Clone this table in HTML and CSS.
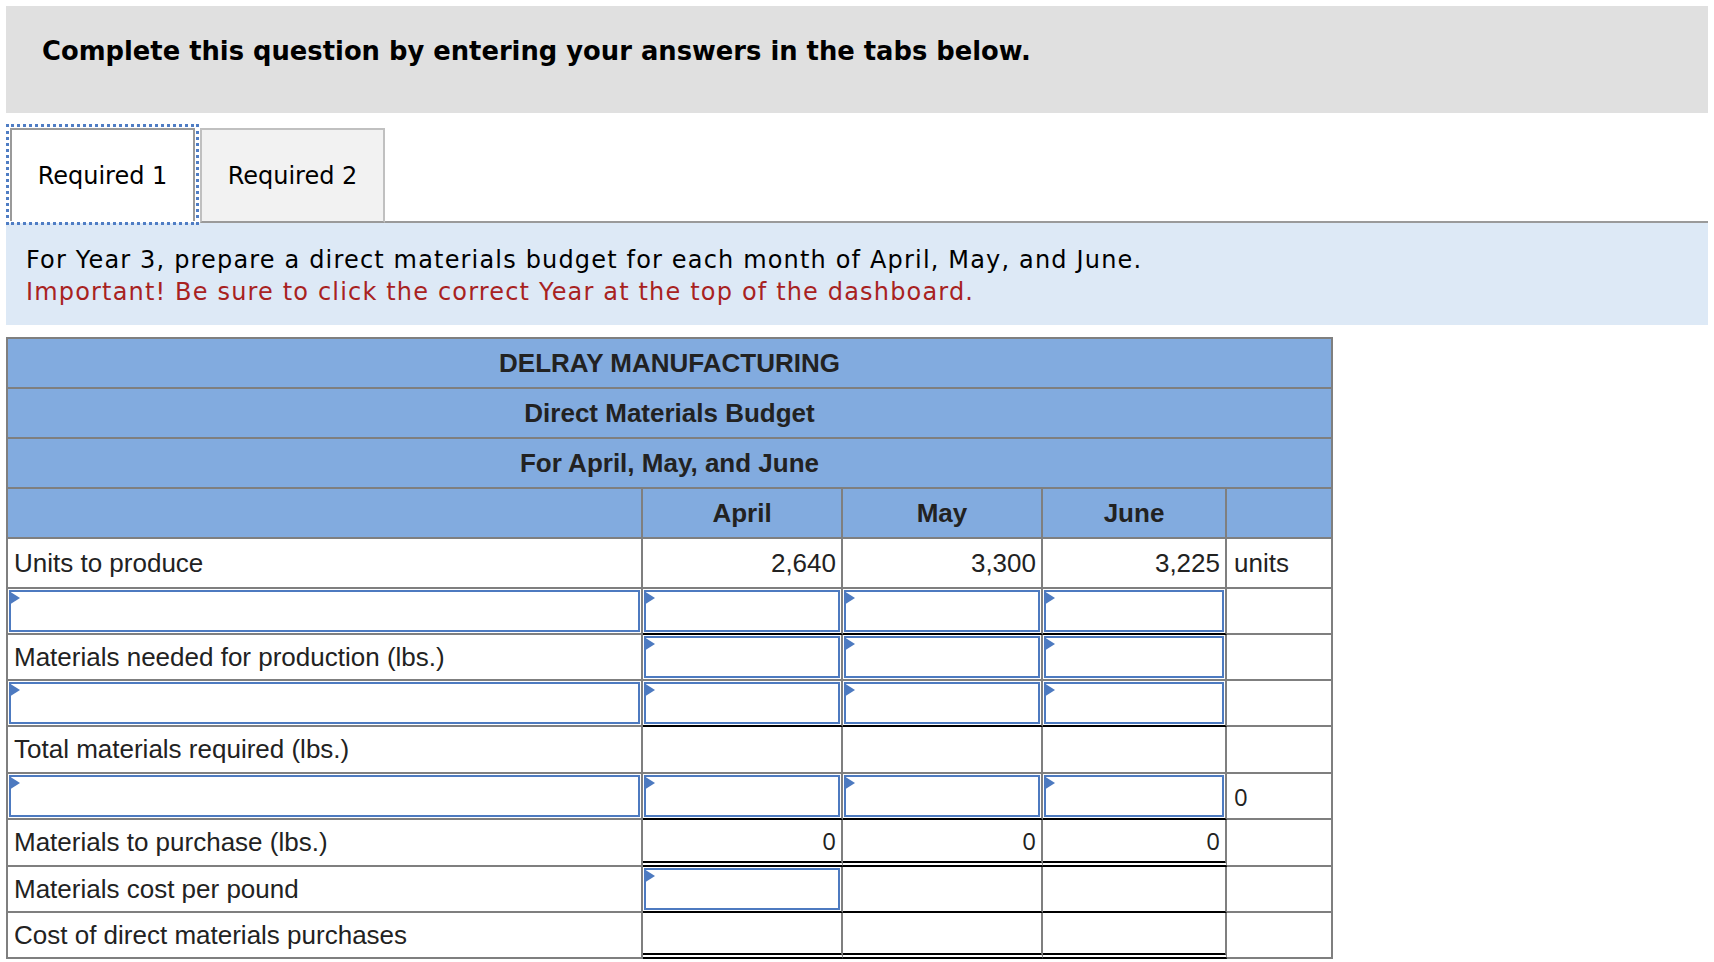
FILE: index.html
```html
<!DOCTYPE html>
<html lang="en">
<head>
<meta charset="utf-8">
<title>Direct Materials Budget</title>
<link rel="stylesheet" href="styles.css">
</head>
<body>
<div class="page">
  <div class="qhead">Complete this question by entering your answers in the tabs below.</div>

  <div class="tabs">
    <div class="tab tab-active">Required 1</div>
    <div class="tab tab-idle">Required 2</div>
    <div class="tab-fill"></div>
  </div>

  <div class="instr">
    <p>For Year 3, prepare a direct materials budget for each month of April, May, and June.</p>
    <p class="important">Important! Be sure to click the correct Year at the top of the dashboard.</p>
  </div>

  <div class="budget">
    <div class="cell hd span">DELRAY MANUFACTURING</div>
    <div class="cell hd span">Direct Materials Budget</div>
    <div class="cell hd span">For April, May, and June</div>

    <div class="cell hd"></div>
    <div class="cell hd">April</div>
    <div class="cell hd">May</div>
    <div class="cell hd">June</div>
    <div class="cell hd"></div>

    <div class="cell lbl">Units to produce</div>
    <div class="cell num">2,640</div>
    <div class="cell num">3,300</div>
    <div class="cell num">3,225</div>
    <div class="cell unit">units</div>

    <div class="cell in"><div class="box"></div></div>
    <div class="cell in line"><div class="box"></div></div>
    <div class="cell in line"><div class="box"></div></div>
    <div class="cell in line"><div class="box"></div></div>
    <div class="cell"></div>

    <div class="cell lbl">Materials needed for production (lbs.)</div>
    <div class="cell in"><div class="box"></div></div>
    <div class="cell in"><div class="box"></div></div>
    <div class="cell in"><div class="box"></div></div>
    <div class="cell"></div>

    <div class="cell in"><div class="box"></div></div>
    <div class="cell in line"><div class="box"></div></div>
    <div class="cell in line"><div class="box"></div></div>
    <div class="cell in line"><div class="box"></div></div>
    <div class="cell"></div>

    <div class="cell lbl">Total materials required (lbs.)</div>
    <div class="cell"></div>
    <div class="cell"></div>
    <div class="cell"></div>
    <div class="cell"></div>

    <div class="cell in"><div class="box"></div></div>
    <div class="cell in line"><div class="box"></div></div>
    <div class="cell in line"><div class="box"></div></div>
    <div class="cell in line"><div class="box"></div></div>
    <div class="cell unit zero">0</div>

    <div class="cell lbl">Materials to purchase (lbs.)</div>
    <div class="cell num zero dbl">0</div>
    <div class="cell num zero dbl">0</div>
    <div class="cell num zero dbl">0</div>
    <div class="cell"></div>

    <div class="cell lbl">Materials cost per pound</div>
    <div class="cell in line"><div class="box"></div></div>
    <div class="cell line"></div>
    <div class="cell line"></div>
    <div class="cell"></div>

    <div class="cell lbl">Cost of direct materials purchases</div>
    <div class="cell dbl"></div>
    <div class="cell dbl"></div>
    <div class="cell dbl"></div>
    <div class="cell"></div>
  </div>
</div>
</body>
</html>
```

FILE: styles.css
```css
html, body {
  margin: 0;
  padding: 0;
  background: #ffffff;
}

body {
  font-family: "DejaVu Sans", Verdana, sans-serif;
  color: #000;
}

.page {
  padding: 6px;
}

/* ---------- question header ---------- */
.qhead {
  background: #e0e0e0;
  height: 107px;
  box-sizing: border-box;
  padding: 30px 0 0 36px;
  font-size: 25.8px;
  line-height: 30px;
  font-weight: bold;
}

/* ---------- tabs ---------- */
.tabs {
  display: flex;
  align-items: flex-start;
  margin-top: 15px;
  padding-left: 4px;
  height: 95px;
}

.tab {
  width: 185px;
  box-sizing: border-box;
  display: flex;
  align-items: center;
  justify-content: center;
  font-size: 24px;
  color: #000;
}

.tab-active {
  height: 93px;
  background: #fff;
  border: 2px solid #9a9a9a;
  border-bottom: none;
  outline: 3px dotted #4f7dc4;
  outline-offset: 1px;
}

.tab-idle {
  height: 95px;
  margin-left: 5px;
  background: #f2f2f2;
  border: 2px solid #c0c0c0;
  border-bottom: 2px solid #9a9a9a;
}

.tab-fill {
  flex: 1;
  align-self: stretch;
  box-sizing: border-box;
  border-bottom: 2px solid #9a9a9a;
}

/* ---------- instructions ---------- */
.instr {
  background: #dde9f6;
  padding: 21px 0 17px 20px;
  font-size: 24px;
  line-height: 32px;
  letter-spacing: 1.17px;
}

.instr p {
  margin: 0;
}

.instr .important {
  color: #a8221f;
}

/* ---------- budget grid ---------- */
.budget {
  margin-top: 12px;
  display: grid;
  width: max-content;
  grid-template-columns: 635px 200px 200px 184px 106px;
  grid-template-rows: 50px 50px 50px 50px 50px 46px 46px 46px 47px 46px 47px 46px 46px;
  border-top: 2px solid #7f7f7f;
  border-left: 2px solid #7f7f7f;
  font-family: "Liberation Sans", Arial, sans-serif;
  font-size: 26px;
  color: #222;
}

.cell {
  box-sizing: border-box;
  display: flex;
  align-items: center;
  padding: 0 6px;
  border-right: 2px solid #7f7f7f;
  border-bottom: 2px solid #7f7f7f;
  white-space: nowrap;
  overflow: hidden;
  min-width: 0;
}

.span {
  grid-column: 1 / -1;
}

.hd {
  background: #82abdf;
  font-weight: bold;
  justify-content: center;
  color: #222;
}

.lbl {
  justify-content: flex-start;
}

.num {
  justify-content: flex-end;
  padding-right: 5px;
}

.unit {
  justify-content: flex-start;
  padding-left: 7px;
}

.zero {
  font-family: "Open Sans", "Liberation Sans", sans-serif;
  font-size: 24px;
}

.cell.in {
  padding: 1px;
  align-items: stretch;
}

.box {
  position: relative;
  flex: 1;
  box-sizing: border-box;
  border: 2px solid #4d7ac0;
  background: #fff;
}

.box::before {
  content: "";
  position: absolute;
  left: -2px;
  top: -1px;
  width: 0;
  height: 0;
  border-left: 11px solid #4d7ac0;
  border-top: 7px solid transparent;
  border-bottom: 7px solid transparent;
}

.cell.line {
  border-bottom-color: #000;
}

.cell.dbl {
  border-bottom: 6px double #000;
}
```
